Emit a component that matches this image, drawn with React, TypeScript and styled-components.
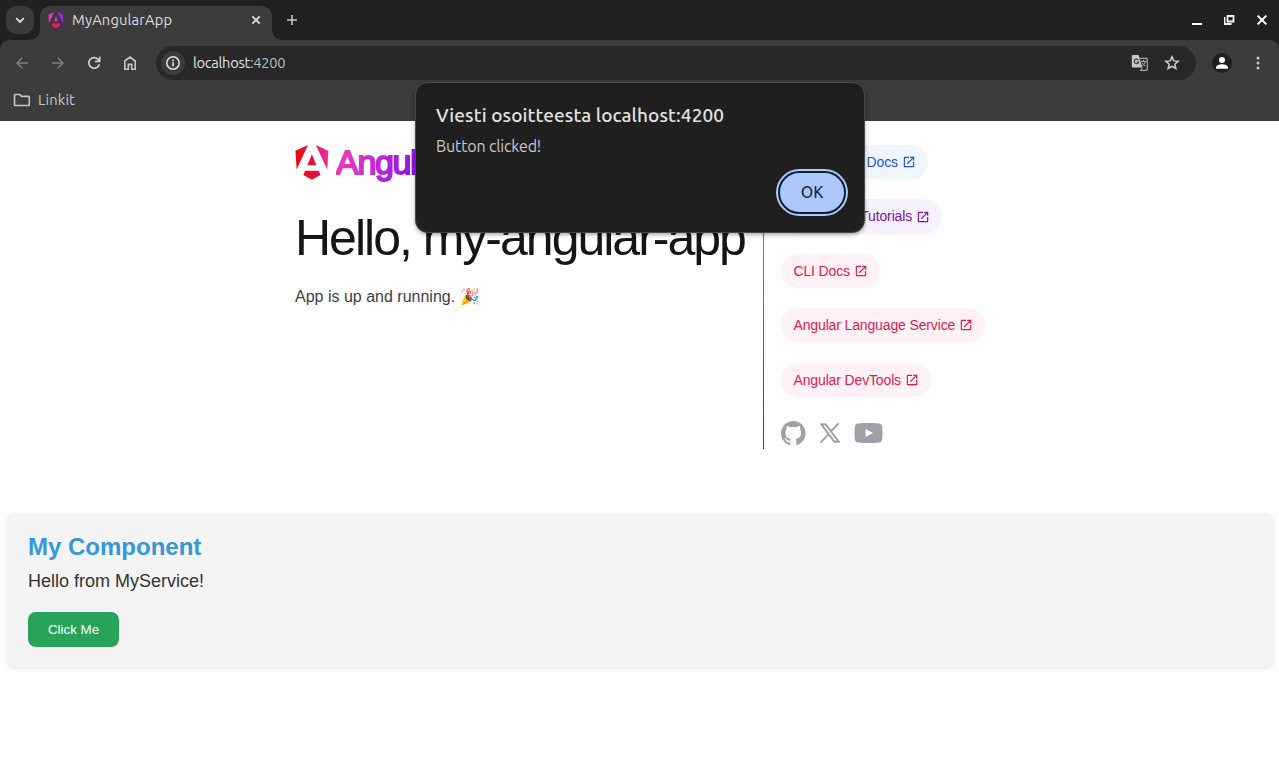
import React from "react";
import styled, { createGlobalStyle } from "styled-components";

const UI_FONT = '"Ubuntu", "Noto Sans", "Open Sans", sans-serif';
const PAGE_FONT = '"Liberation Sans", Arial, sans-serif';

const GlobalStyle = createGlobalStyle`
  *, *::before, *::after { box-sizing: border-box; }
  body { margin: 0; background: #fff; }
`;

const Window = styled.div`
  position: relative;
  height: 765px;
  display: flex;
  flex-direction: column;
  overflow: hidden;
  background: #1f2120;
  font-family: ${UI_FONT};
`;

const TabStrip = styled.div`
  flex: none;
  height: 40px;
  display: flex;
  align-items: center;
  padding: 0 6px;
`;

const TabSearch = styled.div`
  width: 28px;
  height: 28px;
  border-radius: 10px;
  background: #3a3b3b;
  display: grid;
  place-items: center;
`;

const Tab = styled.div`
  position: relative;
  align-self: flex-end;
  width: 232px;
  height: 34px;
  margin-left: 6px;
  padding: 0 9px 6px 8px;
  display: flex;
  align-items: center;
  border-radius: 10px 10px 0 0;
  background: #3c3c3c;

  &::before,
  &::after {
    content: "";
    position: absolute;
    bottom: 0;
    width: 10px;
    height: 10px;
  }
  &::before {
    left: -10px;
    background: radial-gradient(circle at 0 0, transparent 9.5px, #3c3c3c 10px);
  }
  &::after {
    right: -10px;
    background: radial-gradient(circle at 100% 0, transparent 9.5px, #3c3c3c 10px);
  }
`;

const UiText = styled.span<{ $size: number; $color: string; $track?: number; $weight?: number }>`
  font-size: ${(p) => p.$size}px;
  color: ${(p) => p.$color};
  letter-spacing: ${(p) => p.$track ?? 0}px;
  font-weight: ${(p) => p.$weight ?? 400};
  line-height: 20px;
  white-space: nowrap;
`;

const TabTitle = styled(UiText)`
  flex: 1;
  margin-left: 8px;
`;

const Icon = styled.svg`
  display: block;
  flex: none;
`;

const NewTabIcon = styled(Icon)`
  margin-left: 14px;
`;

const WindowControls = styled.div`
  margin-left: auto;
  display: flex;
  align-items: center;
  gap: 20.5px;
  padding-right: 5px;
`;

const Toolbar = styled.div`
  flex: none;
  height: 81px;
  border-radius: 9px 9px 0 0;
  background: #3c3c3c;
`;

const NavRow = styled.div`
  height: 46px;
  display: flex;
  align-items: center;
  padding: 0 13px 0 14px;
`;

const NavButtons = styled.div`
  display: flex;
  gap: 20px;
  width: 142px;
`;

const AddressBar = styled.div`
  width: 1040px;
  height: 34px;
  border-radius: 17px;
  background: #282828;
  display: flex;
  align-items: center;
  padding: 0 16px 0 5px;
`;

const SiteInfo = styled.div`
  width: 24px;
  height: 24px;
  border-radius: 50%;
  background: #3c3c3c;
  display: grid;
  place-items: center;
`;

const Address = styled(UiText)`
  flex: 1;
  margin-left: 8px;
`;

const AddressActions = styled.div`
  display: flex;
  align-items: center;
  gap: 15px;
`;

const Profile = styled.div`
  width: 20px;
  height: 20px;
  margin: 0 18px 0 16px;
  border-radius: 50%;
  background: #1f1f1f;
  display: grid;
  place-items: center;
`;

const Bookmarks = styled.div`
  display: flex;
  align-items: center;
  gap: 8px;
  height: 28px;
  padding-left: 13px;
`;

const Page = styled.div`
  flex: 1;
  padding: 8px 6px 0 7px;
  background: #fff;
  font-family: ${PAGE_FONT};
`;

const Main = styled.main`
  display: flex;
  justify-content: center;
  padding: 16px;
`;

const Content = styled.div`
  width: 700px;
  height: 304px;
  padding-left: 5px;
  display: flex;
`;

const LeftSide = styled.div`
  width: 460px;
  color: #3d3d44;
`;

const Logo = styled.div`
  display: flex;
  height: 36px;
`;

const Wordmark = styled.span`
  width: 115px;
  height: 42px;
  margin-left: 7px;
  font-size: 34px;
  line-height: 34px;
  font-weight: 400;
  letter-spacing: -1.3px;
  color: transparent;
  -webkit-text-stroke: 1.9px transparent;
  background: linear-gradient(105deg, #f637b5 0%, #d934c9 22%, #9c19e4 58%, #7702ff 85%);
  background-clip: text;
  -webkit-background-clip: text;
`;

const Title = styled.h1`
  margin: 32px 0 0;
  font-size: 50px;
  line-height: 50px;
  font-weight: 400;
  letter-spacing: -2px;
  white-space: nowrap;
  color: #151417;
`;

const Status = styled.p`
  margin: 25px 0 0;
  font-size: 16px;
  line-height: 18px;
`;

const Divider = styled.div`
  flex: none;
  width: 1px;
  margin: 0 17px 0 8px;
  background: linear-gradient(to bottom, #f0060b 0%, #e0479a 20%, #cf479c 40%, #a03aa0 65%, #7c2396 85%, #64208c 100%);
`;

const PillGroup = styled.div`
  display: flex;
  flex-direction: column;
  align-items: flex-start;
  gap: 20px;
`;

const Pill = styled.a<{ $color: string; $fill: string }>`
  display: flex;
  align-items: center;
  padding: 6px 12px 6px 12.5px;
  border-radius: 44px;
  color: ${(p) => p.$color};
  background: ${(p) => p.$fill};
  font-size: 14px;
  line-height: 22.4px;
  letter-spacing: -0.14px;
  white-space: nowrap;
`;

const PillIcon = styled(Icon)`
  margin-left: 4.2px;
`;

const Social = styled.div`
  display: flex;
  align-items: center;
  gap: 12px;
  margin-top: 24px;
`;

const Card = styled.section`
  height: 154px;
  margin-top: 48px;
  padding: 20px 21px;
  border-radius: 8px;
  background: #f4f4f4;
  box-shadow: 0 2px 4px rgba(0, 0, 0, 0.1);
`;

const CardTitle = styled.h2`
  margin: 0;
  font-size: 24px;
  line-height: 27px;
  color: #3498db;
`;

const CardText = styled.p`
  margin: 11px 0 21px;
  font-size: 18px;
  line-height: 20px;
  color: #333;
`;

const CardButton = styled.button`
  display: block;
  width: 91px;
  height: 35px;
  padding: 0;
  border: 0;
  border-radius: 8px;
  background: #27a35a;
  color: #fff;
  font: 13.33px ${PAGE_FONT};
`;

const Dialog = styled.div`
  position: absolute;
  left: 416px;
  top: 83px;
  width: 448px;
  height: 149px;
  padding: 22px 18px 18px 20px;
  display: flex;
  flex-direction: column;
  border-radius: 12px;
  background: #1f1f1f;
  box-shadow: 0 0 0 1px #494949, 0 2px 5px rgba(0, 0, 0, 0.45);
`;

const DialogMessage = styled(UiText)`
  margin-top: 11px;
`;

const OkButton = styled.button`
  align-self: flex-end;
  margin-top: 15px;
  width: 68px;
  height: 43px;
  flex: none;
  padding: 0 0 1px;
  border: 2px solid #0f1f36;
  border-radius: 22px;
  background: #aec9f7;
  box-shadow: 0 0 0 2px #aec9f7;
  color: #0b2c66;
  font: 500 16px ${UI_FONT};
`;

const SHIELD =
  "m222.077 39.192-8.019 125.923L137.387 0l84.69 39.192Zm-53.105 162.825-57.933 33.056-57.934-33.056 11.783-28.556h92.301l11.783 28.556ZM111.039 62.675l30.357 73.803H80.681l30.358-73.803ZM7.937 165.115 0 39.192 84.69 0 7.937 165.115Z";

const AngularMark = ({ w, h, id, vivid }: { w: number; h: number; id: string; vivid?: boolean }) => (
  <Icon width={w} height={h} viewBox="0 0 223 236">
    <defs>
      <linearGradient id={id} x1="0" y1={vivid ? "0.6" : "0.3"} x2="1" y2={vivid ? "0.2" : "0.1"}>
        <stop offset="0" stopColor={vivid ? "#f72bbd" : "#f0070b"} />
        <stop offset={vivid ? "0.6" : "0.45"} stopColor={vivid ? "#e02fd0" : "#e5103f"} />
        <stop offset="1" stopColor={vivid ? "#7a1cff" : "#ed2fae"} />
      </linearGradient>
    </defs>
    <path d={SHIELD} fill={`url(#${id})`} />
    {vivid && <path d="m168.972 202.017-57.933 33.056-57.934-33.056 11.783-28.556h92.301Z" fill="#fb1064" />}
  </Icon>
);

const RED = ["#dc1c50", "#fff1f5"];
const LINKS: [string, string, string][] = [
  ["Explore the Docs", "#1a54e0", "#eff6fe"],
  ["Learn with Tutorials", "#7710b8", "#f7f1fe"],
  ["CLI Docs", RED[0], RED[1]],
  ["Angular Language Service", RED[0], RED[1]],
  ["Angular DevTools", RED[0], RED[1]],
];

const line = (color: string, width = 1.8) => ({ fill: "none", stroke: color, strokeWidth: width });

export default function App() {
  return (
    <Window>
      <GlobalStyle />
      <TabStrip>
        <TabSearch>
          <Icon width="10" height="10" viewBox="0 0 10 10">
            <path d="m1.2 3.2 3.8 3.7 3.8-3.7" {...line("#e3e3e3")} />
          </Icon>
        </TabSearch>
        <Tab>
          <AngularMark w={16} h={16} id="tabMark" vivid />
          <TabTitle $size={14.67} $color="#dedede" $track={0.17}>MyAngularApp</TabTitle>
          <Icon width="14" height="14" viewBox="0 0 14 14">
            <path d="m3.3 3.3 7.4 7.4m0-7.4-7.4 7.4" {...line("#dedede", 1.7)} />
          </Icon>
        </Tab>
        <NewTabIcon width="12" height="12" viewBox="0 0 12 12">
          <path d="M6 1v10M1 6h10" {...line("#c7c7c7", 1.6)} />
        </NewTabIcon>
        <WindowControls>
          <Icon width="12" height="12" viewBox="0 0 12 12">
            <path d="M1 10h10" {...line("#fff", 2)} />
          </Icon>
          <Icon width="12" height="12" viewBox="0 0 12 12">
            <path d="M3.5 2h6v5.500h-6zM.5 3v7h7" {...line("#f4f4f4", 1.8)} />
          </Icon>
          <Icon width="12" height="12" viewBox="0 0 12 12">
            <path d="m1.600 1.600 8.800 8.800m0-8.800-8.800 8.800" {...line("#fff", 2)} />
          </Icon>
        </WindowControls>
      </TabStrip>

      <Toolbar>
        <NavRow>
          <NavButtons>
            <Icon width="16" height="16" viewBox="0 0 16 16">
              <path d="M14 8H3M8.3 2.7 3 8l5.3 5.3" {...line("#7d7d7d", 1.5)} />
            </Icon>
            <Icon width="16" height="16" viewBox="0 0 16 16">
              <path d="M2 8h11M7.7 2.7 13 8l-5.3 5.3" {...line("#7d7d7d", 1.5)} />
            </Icon>
            <Icon width="16" height="16" viewBox="0 0 16 16">
              <path d="M13.3 9.2A5.3 5.3 0 1 1 12 4.3L13.2 5.6M13.7 1.8v4.6H9.2" {...line("#d0d0d0", 1.7)} />
            </Icon>
            <Icon width="16" height="16" viewBox="0 0 16 16">
              <path d="M2.8 6 8 2l5.2 4v8.2H9.7V9.4H6.3v4.8H2.8Z" {...line("#c7c7c7", 1.6)} />
            </Icon>
          </NavButtons>
          <AddressBar>
            <SiteInfo>
              <Icon width="16" height="16" viewBox="0 0 16 16">
                <circle cx="8" cy="8" r="6.2" {...line("#e3e3e3", 1.5)} />
                <path d="M8 7.2v4M8 4.5v1.7" {...line("#e3e3e3", 1.6)} />
              </Icon>
            </SiteInfo>
            <Address $size={14.67} $color="#e3e3e3" $track={-0.3}>
              localhost<UiText $size={14.67} $color="#bdbdbd" $track={-0.3}>:4200</UiText>
            </Address>
            <AddressActions>
              <Icon width="18" height="18" viewBox="0 0 18 18">
                <path d="M1.5 1h6.2l3.6 12.5H1.5A.8.8 0 0 1 .8 12.7V1.8A.8.8 0 0 1 1.5 1Z" fill="#c7c7c7" />
                <path d="M8.8 4.3h7.4v12h-6.8l2.2-2.6" {...line("#c7c7c7", 1)} />
                <path d="M7.4 6.1A2.3 2.3 0 1 0 7.7 8H5.6" {...line("#333", 1.1)} />
                <path d="M10 7.4h5.4M12.6 6.2v1.2m1.7 0c-.4 2.2-1.8 3.6-3.2 4.7M11.2 8.7c.6 1.3 1.8 2.6 3.2 3.5" {...line("#c7c7c7", 0.9)} />
              </Icon>
              <Icon width="16" height="16" viewBox="0 0 16 16">
                <path d="m8 1.8 1.75 4.1 4.45.38-3.38 2.93 1.02 4.35L8 11.25l-3.84 2.31 1.02-4.35L1.8 6.28l4.45-.38Z" {...line("#d0d0d0", 1.5)} />
              </Icon>
            </AddressActions>
          </AddressBar>
          <Profile>
            <Icon width="14" height="14" viewBox="0 0 14 14">
              <circle cx="7" cy="4" r="3" fill="#fff" />
              <path d="M1 12.8v-1.3C1 9.4 4.4 8.2 7 8.2s6 1.2 6 3.3v1.3Z" fill="#fff" />
            </Icon>
          </Profile>
          <Icon width="16" height="16" viewBox="0 0 16 16">
            {[3, 8, 13].map((y) => (
              <circle key={y} cx="8" cy={y} r="1.5" fill="#c7c7c7" />
            ))}
          </Icon>
        </NavRow>
        <Bookmarks>
          <Icon width="17" height="14" viewBox="0 0 17 14">
            <path d="M1.500 2.500c0-.6.4-1 1-1h4.300l1.800 1.800H15.300c.6 0 1 .4 1 1v7.200c0 .6-.4 1-1 1H2.500c-.6 0-1-.4-1-1Z" {...line("#c7c7c7", 1.7)} />
          </Icon>
          <UiText $size={14.67} $color="#c7c7c7" $track={0.15}>Linkit</UiText>
        </Bookmarks>
      </Toolbar>

      <Page>
        <Main>
          <Content>
            <LeftSide>
              <Logo>
                <AngularMark w={34} h={35} id="logoMark" />
                <Wordmark>Angular</Wordmark>
              </Logo>
              <Title>Hello, my-angular-app</Title>
              <Status>App is up and running. 🎉</Status>
            </LeftSide>
            <Divider />
            <div>
              <PillGroup>
                {LINKS.map(([label, color, fill]) => (
                  <Pill key={label} $color={color} $fill={fill}>
                    {label}
                    <PillIcon width="14" height="14" viewBox="0 -960 960 960" fill="currentColor">
                      <path d="M200-120q-33 0-56.5-23.5T120-200v-560q0-33 23.5-56.5T200-840h280v80H200v560h560v-280h80v280q0 33-23.5 56.5T760-120H200Zm188-212-56-56 372-372H560v-80h280v280h-80v-144L388-332Z" />
                    </PillIcon>
                  </Pill>
                ))}
              </PillGroup>
              <Social>
                <Icon width="25" height="24" viewBox="0 0 25 24" fill="#a19fa9">
                  <path d="M12.3047 0C5.50634 0 0 5.50942 0 12.3047C0 17.7423 3.52529 22.3535 8.41332 23.9787C9.02856 24.0946 9.25414 23.7142 9.25414 23.3871C9.25414 23.0949 9.24389 22.3207 9.23876 21.2953C5.81601 22.0377 5.09414 19.6444 5.09414 19.6444C4.53427 18.2243 3.72524 17.8449 3.72524 17.8449C2.61064 17.082 3.81137 17.0973 3.81137 17.0973C5.04697 17.1835 5.69604 18.3647 5.69604 18.3647C6.79321 20.2463 8.57636 19.7029 9.27978 19.3881C9.39052 18.5924 9.70736 18.0499 10.0591 17.7423C7.32641 17.4347 4.45429 16.3765 4.45429 11.6618C4.45429 10.3185 4.9311 9.22133 5.72065 8.36C5.58222 8.04931 5.16694 6.79833 5.82831 5.10337C5.82831 5.10337 6.85883 4.77319 9.2121 6.36459C10.1965 6.09082 11.2424 5.95546 12.2883 5.94931C13.3342 5.95546 14.3801 6.09082 15.3644 6.36459C17.7023 4.77319 18.7328 5.10337 18.7328 5.10337C19.3942 6.79833 18.9789 8.04931 18.8559 8.36C19.6403 9.22133 20.1171 10.3185 20.1171 11.6618C20.1171 16.3888 17.2409 17.4296 14.5031 17.7321C14.9338 18.1012 15.3337 18.8559 15.3337 20.0084C15.3337 21.6552 15.3183 22.978 15.3183 23.3779C15.3183 23.7009 15.5336 24.0854 16.1642 23.9623C21.0871 22.3484 24.6094 17.7341 24.6094 12.3047C24.6094 5.50942 19.0999 0 12.3047 0Z" />
                </Icon>
                <Icon width="24" height="24" viewBox="-2 -2.6 24 24" fill="#a19fa9">
                  <path
                    stroke="#a19fa9"
                    strokeWidth="0.8"
                    fillRule="evenodd"
                    d="M.04.04 7.76 10.37 0 18.76h1.75l6.79-7.35 5.49 7.35h5.94L11.82 7.86 19.05.04H17.3L11.05 6.8 6 .04ZM2.61 1.33h2.73L17.4 17.45h-2.73Z"
                  />
                </Icon>
                <Icon width="29" height="20" viewBox="0 0 29 20">
                  <path
                    fill="#a19fa9"
                    fillRule="evenodd"
                    d="M4 .45C7 0 11 0 14.5 0S22 0 25 .45c1.7.25 3 1.5 3.2 3.1.4 3.9.4 9 0 12.9-.2 1.6-1.5 2.85-3.2 3.1-3 .45-7 .45-10.5.45S7 20 4 19.55C2.3 19.3 1 18.05.8 16.450c-.4-3.9-.4-9 0-12.900C1 1.95 2.3.7 4 .45ZM11.6 5.9v8.2L19 10Z"
                  />
                </Icon>
              </Social>
            </div>
          </Content>
        </Main>
        <Card>
          <CardTitle>My Component</CardTitle>
          <CardText>Hello from MyService!</CardText>
          <CardButton>Click Me</CardButton>
        </Card>
      </Page>

      <Dialog role="alertdialog">
        <UiText $size={19} $color="#e3e3e3" $track={0.1} $weight={500}>Viesti osoitteesta localhost:4200</UiText>
        <DialogMessage $size={16} $color="#c7c7c7" $track={-0.15}>Button clicked!</DialogMessage>
        <OkButton>OK</OkButton>
      </Dialog>
    </Window>
  );
}
